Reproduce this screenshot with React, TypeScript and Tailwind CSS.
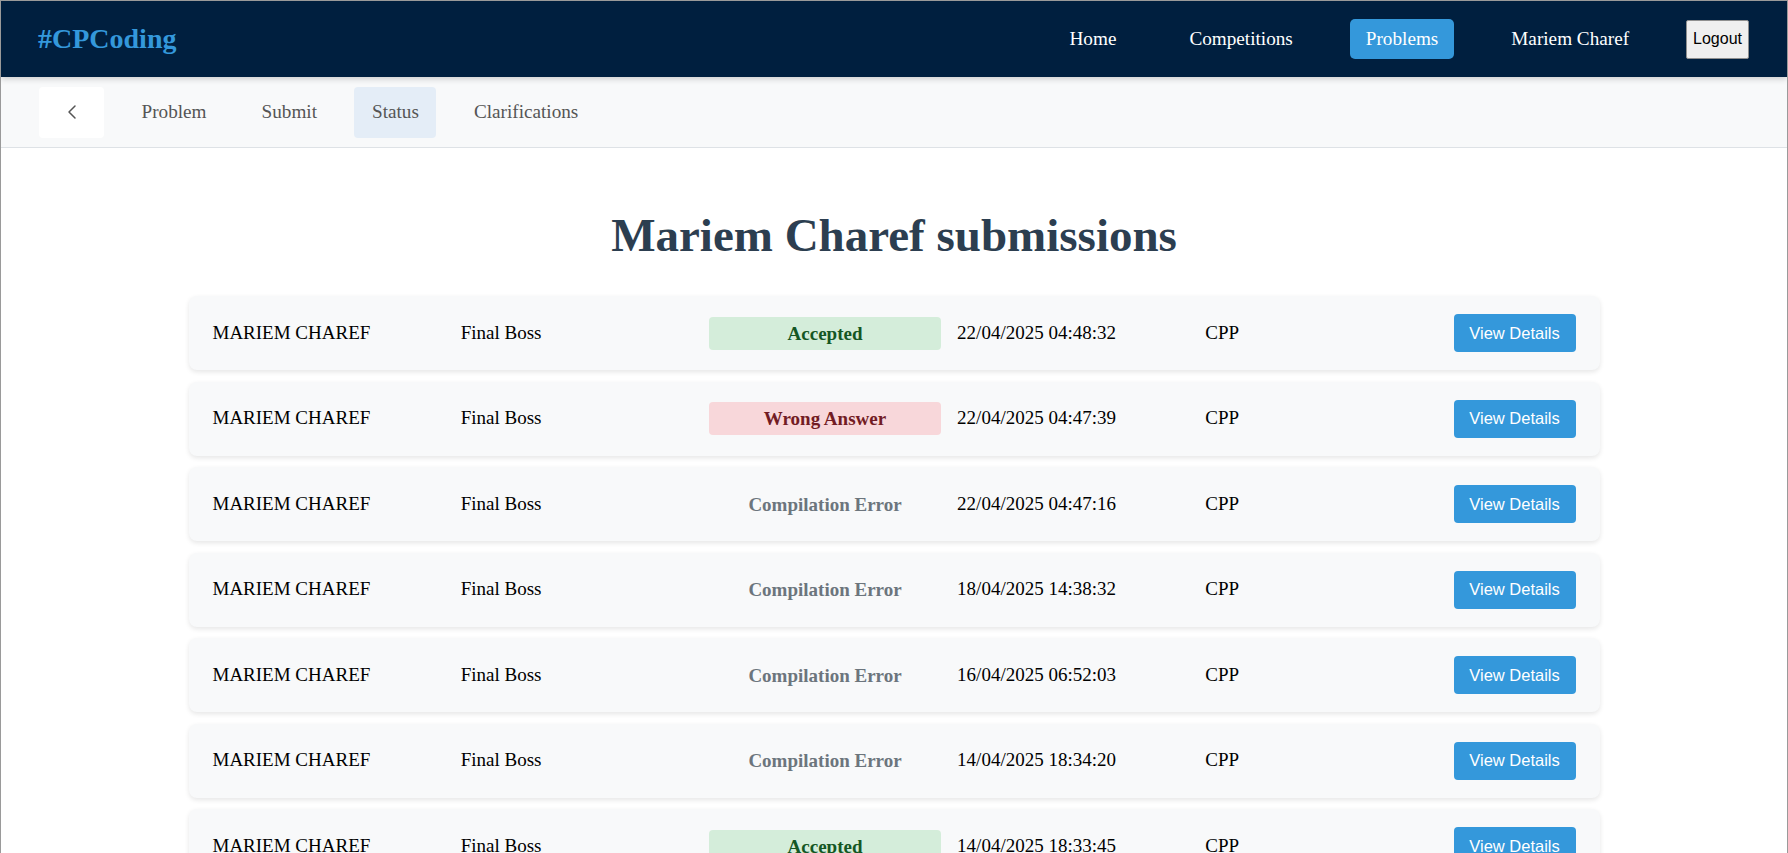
import React from "react";
import { ChevronLeft } from "lucide-react";

const submissions = [
    { status: "Accepted", date: "22/04/2025 04:48:32" },
    { status: "Wrong Answer", date: "22/04/2025 04:47:39" },
    { status: "Compilation Error", date: "22/04/2025 04:47:16" },
    { status: "Compilation Error", date: "18/04/2025 14:38:32" },
    { status: "Compilation Error", date: "16/04/2025 06:52:03" },
    { status: "Compilation Error", date: "14/04/2025 18:34:20" },
    { status: "Accepted", date: "14/04/2025 18:33:45" },
];

const statusClass = {
    Accepted: "bg-[#d4edda] text-[#155724]",
    "Wrong Answer": "bg-[#f8d7da] text-[#721c24]",
    "Compilation Error": "text-[#6c757d]",
};

const navLinks = ["Home", "Competitions", "Problems", "Mariem Charef"];
const tabs = ["Problem", "Submit", "Status", "Clarifications"];

const App = () => {
    return (
        <div className="h-screen overflow-hidden bg-white border-x border-t border-[#9a9a9a] font-['Liberation_Serif',serif]">
            {/* top navbar */}
            <nav className="relative z-10 flex h-[76px] items-center justify-between bg-[#001f3f] pl-[37px] pr-[38px] shadow-[0_2px_6px_rgba(0,0,0,0.18)]">
                <span className="text-[28px] font-bold text-[#3498db]">#CPCoding</span>
                <div className="flex items-center gap-[41px]">
                    {navLinks.map((link) => (
                        <a
                            key={link}
                            className={`flex h-[40px] items-center rounded-[5px] px-4 text-[1.2rem] text-white ${link === "Problems" ? "bg-[#3498db]" : ""}`}
                        >
                            {link}
                        </a>
                    ))}
                    <button className="h-[39px] rounded-[2px] border border-[#8f8f8f] bg-[#efefef] px-[6px] font-['Liberation_Sans',Arial,sans-serif] text-base text-black">
                        Logout
                    </button>
                </div>
            </nav>

            {/* problem tabs */}
            <div className="flex h-[71px] items-center gap-5 border-b border-[#dee2e6] bg-[#f8f9fa] pl-[38px]">
                <button className="flex h-[51px] w-[65px] items-center justify-center rounded bg-white text-[#555]">
                    <ChevronLeft size={24} strokeWidth={1.5} />
                </button>
                {tabs.map((tab) => (
                    <div
                        key={tab}
                        className={`flex h-[51px] items-center rounded px-[17.5px] text-[1.2rem] text-[#555] ${tab === "Status" ? "bg-[#e4edf7]" : ""}`}
                    >
                        {tab}
                    </div>
                ))}
            </div>

            <main>
                <h1 className="pt-[60px] text-center text-[47px] font-bold leading-[55px] text-[#2c3e50]">
                    Mariem Charef submissions
                </h1>
                <div className="mx-auto mt-[33px] flex w-[1411px] flex-col gap-[11.5px]">
                    {submissions.map((s, i) => (
                        <div
                            key={i}
                            className="flex items-center gap-4 rounded-lg bg-[#f8f9fa] px-6 py-[18px] text-[19px] text-black shadow-[0_2px_5px_rgba(0,0,0,0.1)]"
                        >
                            <div className="min-w-0 flex-1">MARIEM CHAREF</div>
                            <div className="min-w-0 flex-1">Final Boss</div>
                            <div className="min-w-0 flex-1">
                                <div className={`rounded py-[5px] text-center font-bold leading-[23px] ${statusClass[s.status]}`}>
                                    {s.status}
                                </div>
                            </div>
                            <div className="min-w-0 flex-1">{s.date}</div>
                            <div className="min-w-0 flex-1">CPP</div>
                            <button className="h-[38px] w-[122px] rounded bg-[#3498db] font-['Liberation_Sans',Arial,sans-serif] text-[16.5px] text-white">
                                View Details
                            </button>
                        </div>
                    ))}
                </div>
            </main>
        </div>
    );
};

export default App;
